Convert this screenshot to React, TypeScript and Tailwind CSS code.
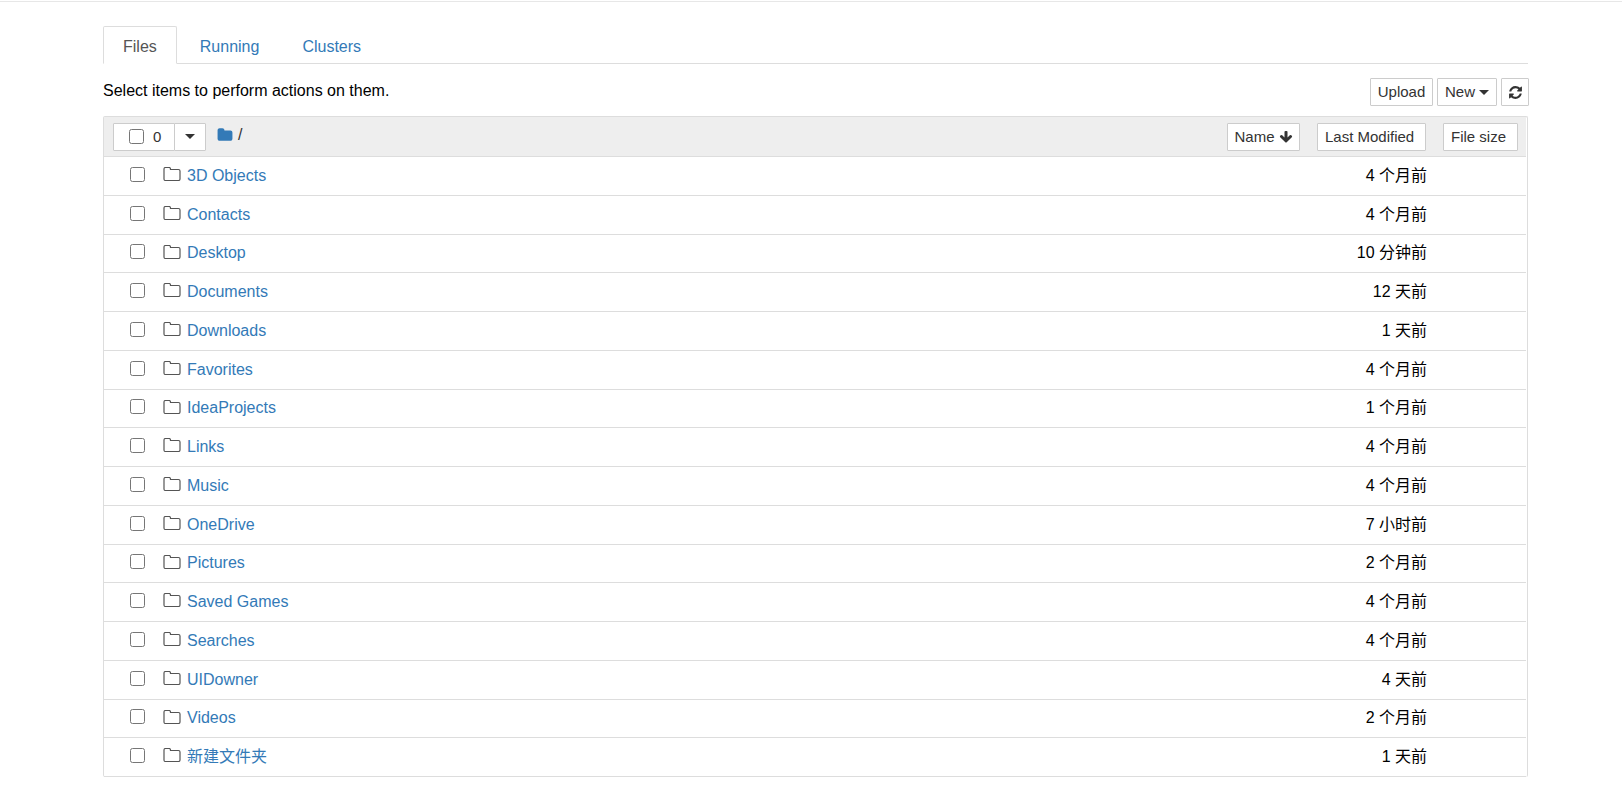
import { useState } from "react";

const FILES = [
  { name: "3D Objects", modified: "4 个月前" },
  { name: "Contacts", modified: "4 个月前" },
  { name: "Desktop", modified: "10 分钟前" },
  { name: "Documents", modified: "12 天前" },
  { name: "Downloads", modified: "1 天前" },
  { name: "Favorites", modified: "4 个月前" },
  { name: "IdeaProjects", modified: "1 个月前" },
  { name: "Links", modified: "4 个月前" },
  { name: "Music", modified: "4 个月前" },
  { name: "OneDrive", modified: "7 小时前" },
  { name: "Pictures", modified: "2 个月前" },
  { name: "Saved Games", modified: "4 个月前" },
  { name: "Searches", modified: "4 个月前" },
  { name: "UIDowner", modified: "4 天前" },
  { name: "Videos", modified: "2 个月前" },
  { name: "新建文件夹", modified: "1 天前" },
];

const ICONS = {
  folder:
    "M1728 608v704q0 92-66 158t-158 66h-1216q-92 0-158-66t-66-158v-960q0-92 66-158t158-66h320q92 0 158 66t66 158v32h672q92 0 158 66t66 158z",
  arrowDown:
    "M1675 832q0 53-37 90l-651 652q-39 37-91 37-53 0-90-37l-651-652q-38-36-38-90 0-53 38-91l74-75q39-37 91-37 53 0 90 37l294 294v-704q0-52 38-90t90-38h128q52 0 90 38t38 90v704l294-294q37-37 90-37 52 0 91 37l75 75q37 39 37 91z",
  refresh:
    "M1639 1056q0 5-1 7-64 268-268 434.5t-478 166.5q-146 0-282.5-55t-243.5-157l-129 129q-19 19-45 19t-45-19-19-45v-448q0-26 19-45t45-19h448q26 0 45 19t19 45-19 45l-137 137q71 66 161 102t187 36q134 0 250-65t186-179q11-17 53-117 8-23 30-23h192q13 0 22.5 9.5t9.5 22.5zm25-800v448q0 26-19 45t-45 19h-448q-26 0-45-19t-19-45 19-45l138-138q-148-137-349-137-134 0-250 65t-186 179q-11 17-53 117-8 23-30 23h-199q-13 0-22.5-9.5t-9.5-22.5v-7q65-268 270-434.5t480-166.5q146 0 284 55.5t245 156.5l130-129q19-19 45-19t45 19 19 45z",
};

const BUTTON =
  "inline-flex h-7 items-center rounded-[1px] border border-[#ccc] bg-white text-[15px] leading-5 text-[#333] cursor-pointer hover:bg-[#e6e6e6]";

export default function App() {
  const [selected, setSelected] = useState<string[]>([]);

  const toggle = (name: string) =>
    setSelected((prev) =>
      prev.includes(name) ? prev.filter((n) => n !== name) : [...prev, name]
    );

  const toggleAll = () =>
    setSelected((prev) =>
      prev.length === FILES.length ? [] : FILES.map((f) => f.name)
    );

  return (
    <div className="min-h-screen bg-white pt-px text-base text-black font-['Liberation_Sans','Noto_Sans_CJK_SC',sans-serif]">
      <header className="border-b border-[#e7e7e7]" />

      <main className="pt-6 pb-6 pl-[103px] pr-[94px]">
        {/* Tabs */}
        <nav className="flex gap-[3px] border-b border-[#ddd]">
          <a
            href="#files"
            className="-mb-px rounded-t-xs border border-[#ddd] border-b-white bg-white px-[19px] pt-2 pb-1 leading-6 text-[#555]"
          >
            Files
          </a>
          <Tab label="Running" />
          <Tab label="Clusters" />
        </nav>

        {/* Toolbar */}
        <div className="-mr-px flex items-start justify-between pt-[14px] pb-[10px]">
          <p className="leading-[26px]">Select items to perform actions on them.</p>
          <div className="flex gap-1">
            <button className={`${BUTTON} w-[63px] justify-center`}>Upload</button>
            <button className={`${BUTTON} w-[60px] justify-center gap-1`}>
              New
              <Caret />
            </button>
            <button className={`${BUTTON} w-7 justify-center`} aria-label="Refresh">
              <Icon path={ICONS.refresh} className="size-[15px]" />
            </button>
          </div>
        </div>

        {/* File list */}
        <div className="rounded-xs border border-b-0 border-[#ddd] pr-px">
          <table className="w-full border-collapse">
            <thead>
              <tr className="h-[39px] border-b border-[#ddd] bg-[#eee] text-left font-normal">
                <th className="p-0 pt-px pl-[9px] font-normal">
                  <div className="flex items-center justify-between pr-2">
                    <div className="flex items-center">
                      <div className="flex">
                        <label className={`${BUTTON} w-[62px] gap-[9px] pl-[15px]`}>
                          <input
                            type="checkbox"
                            aria-label="Select all"
                            className="size-[15px]"
                            checked={selected.length === FILES.length}
                            onChange={toggleAll}
                          />
                          {selected.length}
                        </label>
                        <button
                          className={`${BUTTON} -ml-px w-8 justify-center`}
                          aria-label="Select by type"
                        >
                          <Caret />
                        </button>
                      </div>
                      <div className="ml-[11px] flex items-center gap-[5px] pb-[3px]">
                        <a href="#root" aria-label="Home" className="text-[#337ab7]">
                          <Icon path={ICONS.folder} className="size-4" />
                        </a>
                        <span className="text-[#333]">/</span>
                      </div>
                    </div>
                    <button className={`${BUTTON} w-[73px] justify-center gap-1`}>
                      Name
                      <Icon path={ICONS.arrowDown} className="size-[14px]" />
                    </button>
                  </div>
                </th>
                <th className="w-[127px] p-0 pt-px pl-[9px] font-normal">
                  <button className={`${BUTTON} w-[109px] px-[7px]`}>Last Modified</button>
                </th>
                <th className="w-[91px] p-0 pt-px pl-2 font-normal">
                  <button className={`${BUTTON} w-[75px] px-[7px]`}>File size</button>
                </th>
              </tr>
            </thead>
            <tbody>
              {FILES.map((file) => (
                <tr
                  key={file.name}
                  className="h-[39px] border-b border-[#ddd] nth-[4n+3]:h-[38px] hover:bg-[#f5f5f5]"
                >
                  <td className="p-0 pl-[26px]">
                    <div className="flex items-center">
                      <input
                        type="checkbox"
                        aria-label={file.name}
                        className="mr-[18px] mb-[3px] size-[15px]"
                        checked={selected.includes(file.name)}
                        onChange={() => toggle(file.name)}
                      />
                      <FolderOutline />
                      <a href="#folder" className="leading-6 text-[#337ab7] hover:underline">
                        {file.name}
                      </a>
                    </div>
                  </td>
                  <td className="p-0 pr-2 text-right leading-6 whitespace-nowrap">
                    {file.modified}
                  </td>
                  <td className="p-0" />
                </tr>
              ))}
            </tbody>
          </table>
        </div>
      </main>
    </div>
  );
}

function Tab({ label }: { label: string }) {
  return (
    <a href={`#${label.toLowerCase()}`} className="px-5 pt-[9px] pb-1 leading-6 text-[#337ab7]">
      {label}
    </a>
  );
}

function FolderOutline() {
  return (
    <svg
      viewBox="0 0 18 14"
      className="mr-[6px] mb-[3px] h-[14px] w-[18px] text-[#555]"
      fill="none"
      stroke="currentColor"
      strokeWidth="1.2"
      aria-hidden="true"
    >
      <path d="M1 2Q1 .5 2.500.5H6Q7.500.5 7.500 2v.5H15.500Q17 2.500 17 4v8Q17 13.500 15.500 13.500h-13Q1 13.500 1 12z" />
    </svg>
  );
}

function Caret() {
  return (
    <svg viewBox="0 0 10 5" className="h-[5px] w-[10px]" fill="currentColor" aria-hidden="true">
      <path d="M0 0h10L5 5z" />
    </svg>
  );
}

function Icon({ path, className }: { path: string; className: string }) {
  return (
    <svg viewBox="0 0 1792 1792" className={className} fill="currentColor" aria-hidden="true">
      <path d={path} />
    </svg>
  );
}
